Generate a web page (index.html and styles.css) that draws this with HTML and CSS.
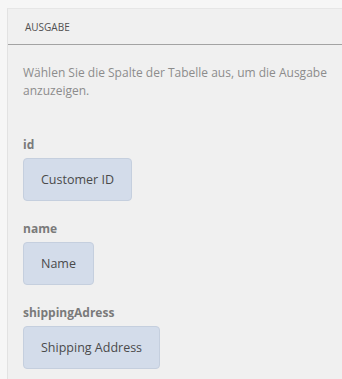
FILE: index.html
```html
<!DOCTYPE html>
<html lang="de">
<head>
  <meta charset="UTF-8" />
  <title>Ausgabe</title>
  <link rel="stylesheet" href="styles.css">
</head>
<body>
  <div class="panel">
    <div class="panel-header">AUSGABE</div>
    <div class="panel-body">
      <p class="hint">Wählen Sie die Spalte der Tabelle aus, um die Ausgabe anzuzeigen.</p>

      <div class="field">
        <div class="field-label">id</div>
        <div class="chip">Customer ID</div>
      </div>

      <div class="field">
        <div class="field-label">name</div>
        <div class="chip">Name</div>
      </div>

      <div class="field">
        <div class="field-label">shippingAdress</div>
        <div class="chip">Shipping Address</div>
      </div>
    </div>
  </div>
</body>
</html>
```

FILE: styles.css
```css
body {
  margin: 0;
  padding: 8px 0 0 7px;
  background: #f6f6f6;
  font-family: 'Open Sans', sans-serif;
  color: #4b4b4b;
}

.panel {
  background: #f0f0f0;
  border-left: 1px solid #e2e2e2;
  border-top: 1px solid #e6e6e6;
  min-height: 371px;
}

.panel-header {
  height: 35px;
  line-height: 36px;
  padding-left: 17px;
  font-size: 10px;
  color: #505050;
  border-bottom: 1px solid #a3a3a3;
}

.panel-body {
  padding: 19px 0 0 15px;
}

.hint {
  margin: 0 0 37px;
  font-size: 12px;
  line-height: 18px;
  color: #8c8c8c;
}

.field {
  margin-bottom: 20px;
}

.field-label {
  font-size: 12px;
  font-weight: bold;
  color: #7a7a7a;
  line-height: 16px;
  margin-bottom: 5px;
}

.chip {
  display: inline-block;
  height: 41px;
  line-height: 41px;
  padding: 0 17px;
  background: #d3dcea;
  border: 1px solid #c5cfde;
  border-radius: 4px;
  font-size: 12.5px;
  color: #4a4a4a;
}
```
